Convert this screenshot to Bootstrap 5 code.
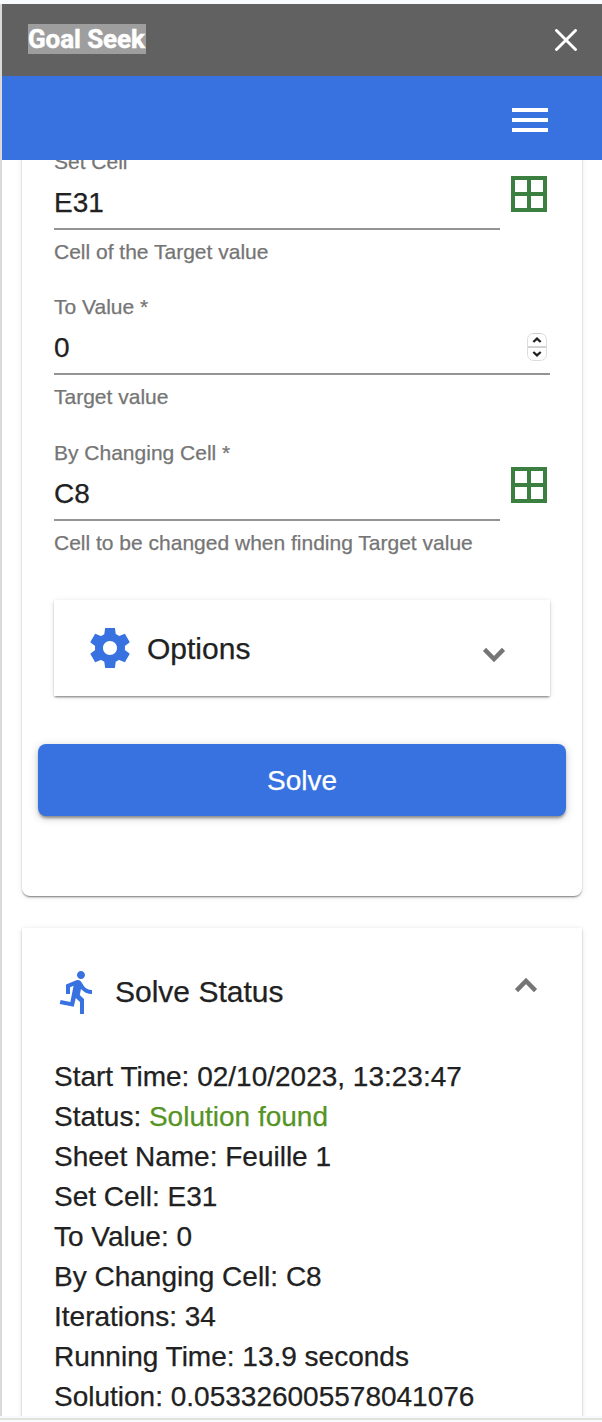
<!DOCTYPE html>
<html lang="en">
<head>
<meta charset="utf-8">
<meta name="viewport" content="width=device-width, initial-scale=1">
<title>Goal Seek</title>
<link href="https://cdn.jsdelivr.net/npm/bootstrap@5.3.0/dist/css/bootstrap.min.css" rel="stylesheet">
<style>
  :root { --brand: #3872e0; --ink: #212121; --muted: #757575; --green: #3b8040; }
  body { font-family: "Liberation Sans", Arial, sans-serif; background: #f8fafd; color: var(--ink); font-size: 28px; padding-top: 4px; height: 1422px; overflow: hidden; -webkit-text-stroke: .25px currentColor; }
  .sidebar { height: 1412px; border-left: 2px solid #dadada; background: #fff; }
  .titlebar { height: 72px; background: #616161; padding: 0 25px 2px 26px; }
  .titlebar h1 { font: 700 26px/30px Roboto, sans-serif; background: #9e9e9e; color: #fff; width: 118px; white-space: nowrap; letter-spacing: -.1px; -webkit-text-stroke: .5px #fff; }
  .titlebar svg { margin-top: 2px; }
  .appbar { height: 84px; background: var(--brand); padding: 4px 48px 0 0; }
  .scroller { padding: 0 20px; }
  .panel { background: #fff; box-shadow: 0 2px 2px -1px rgba(0,0,0,.4), 0 1px 2px rgba(0,0,0,.14), 0 1px 6px rgba(0,0,0,.1); }
  .form-panel { margin-top: -20px; height: 756px; padding: 10px 16px 0; border-radius: 0 0 8px 8px; }
  .field-row { height: 145px; padding: 0 16px; gap: 5px; }
  .field-row.tall { height: 146px; }
  .field-label, .hint { font-size: 21px; line-height: 24px; color: var(--muted); white-space: nowrap; }
  .field-value { margin-top: 13px; height: 43px; line-height: 32px; border-bottom: 2px solid #949494; }
  .hint { margin-top: 10px; }
  .picker { width: 48px; margin: 20px -3px 0 0; }
  .stepper { margin-right: 3px; }
  .options { margin: 14px 16px 0; height: 96px; padding: 0 32px; font-size: 30px; }
  .panel-name { margin: 0 auto 0 13px; }
  .solve { margin-top: 48px; height: 72px; padding: 2px 0 0; border-radius: 8px; background: var(--brand); color: #fff; font-size: 28px; box-shadow: 0 3px 3px -1px rgba(0,0,0,.38), 0 2px 8px rgba(0,0,0,.22); border: 0; }
  .solve:hover { background: #2c64cf; color: #fff; }
  .status-panel { margin-top: 32px; height: 520px; padding: 0 32px; }
  .status-head { height: 129px; padding-bottom: 1px; font-size: 30px; }
  .status-head .panel-name { margin-bottom: 2px; }
  .chevron-up { margin-bottom: 16px; }
  .status-list { line-height: 40px; white-space: nowrap; }
  .found { color: #559424; }
  .bottom-rule { margin-top: 2px; height: 2px; background: #dfe3dc; }
</style>
</head>
<body>
<main class="sidebar d-flex flex-column overflow-hidden">
  <header class="titlebar d-flex align-items-center justify-content-between flex-shrink-0">
    <h1 class="m-0">Goal Seek</h1>
    <svg width="22" height="22" viewBox="0 0 22 22" fill="none" stroke="#fff" stroke-width="2.9" stroke-linecap="round"><path d="M1.5 1.5l19 19M20.500 1.500l-19 19"/></svg>
  </header>
  <nav class="appbar d-flex align-items-center justify-content-end flex-shrink-0">
    <svg width="48" height="48" viewBox="0 0 24 24" fill="#fff"><path d="M3 18h18v-2H3v2zm0-5h18v-2H3v2zm0-7v2h18V6H3z"/></svg>
  </nav>
  <div class="scroller overflow-hidden flex-grow-1">
    <section class="panel form-panel">
      <div class="field-row d-flex">
        <div class="flex-grow-1">
          <div class="field-label">Set Cell</div>
          <div class="field-value">E31</div>
          <div class="hint">Cell of the Target value</div>
        </div>
        <svg class="picker flex-shrink-0" height="48" viewBox="0 0 24 24" fill="#3b8040"><path d="M3 3v18h18V3H3zm8 16H5v-6h6v6zm0-8H5V5h6v6zm8 8h-6v-6h6v6zm0-8h-6V5h6v6z"/></svg>
      </div>
      <div class="field-row tall d-flex">
        <div class="flex-grow-1">
          <div class="field-label">To Value *</div>
          <div class="field-value d-flex justify-content-between">
            <span>0</span>
            <svg class="stepper" width="20" height="30" viewBox="0 0 20 30" fill="none"><rect x=".5" y="1.500" width="19" height="27" rx="6" fill="#fff" stroke="#dcdcdc"/><path d="M6 1.500h8" stroke="#ccc"/><path d="M1 15h18" stroke="#d2d2d2" stroke-width="2"/><path d="M6.300 10L10 6.600 13.700 10M6.300 20L10 23.400 13.700 20" stroke="#222" stroke-width="2.300"/></svg>
          </div>
          <div class="hint">Target value</div>
        </div>
      </div>
      <div class="field-row d-flex">
        <div class="flex-grow-1">
          <div class="field-label">By Changing Cell *</div>
          <div class="field-value">C8</div>
          <div class="hint">Cell to be changed when finding Target value</div>
        </div>
        <svg class="picker flex-shrink-0" height="48" viewBox="0 0 24 24" fill="#3b8040"><path d="M3 3v18h18V3H3zm8 16H5v-6h6v6zm0-8H5V5h6v6zm8 8h-6v-6h6v6zm0-8h-6V5h6v6z"/></svg>
      </div>
      <div class="panel options d-flex align-items-center">
        <svg width="48" height="48" viewBox="0 0 24 24" fill="#3872e0"><path d="M19.440 12.990l-.01.020c.04-.33.080-.67.080-1.010 0-.34-.03-.66-.07-.99l.01.020 2.440-1.920-2.430-4.220-2.870 1.160.01.010c-.52-.4-1.090-.74-1.710-1h.010L14.440 2H9.570l-.44 3.070h.010c-.62.260-1.190.6-1.710 1l.01-.01-2.880-1.170-2.440 4.220 2.440 1.920.01-.02c-.04.330-.07.650-.07.990 0 .340.030.680.080 1.010l-.01-.02-2.100 1.650-.33.260 2.430 4.200 2.880-1.150-.02-.04c.53.410 1.100.750 1.730 1.010h-.03L9.580 22h4.850s.03-.18.060-.42l.38-2.650h-.01c.62-.26 1.200-.6 1.730-1.010l-.02.040 2.880 1.150 2.430-4.200s-.14-.12-.33-.26l-2.110-1.660zM12 15.500c-1.930 0-3.500-1.570-3.500-3.500s1.570-3.500 3.500-3.500 3.500 1.570 3.500 3.500-1.570 3.500-3.500 3.500z"/></svg>
        <span class="panel-name">Options</span>
        <svg class="mt-3 me-2" width="32" height="24" viewBox="0 0 32 24" fill="none" stroke="#757575" stroke-width="4.400"><path d="M6.500 5.400L16 15l9.500-9.600"/></svg>
      </div>
      <button type="button" class="btn solve w-100 d-block">Solve</button>
    </section>
    <section class="panel status-panel">
      <div class="status-head d-flex align-items-center">
        <svg width="48" height="48" viewBox="0 0 24 24" fill="#3872e0"><path d="M13.490 5.480c1.100 0 2-.9 2-2s-.9-2-2-2-2 .9-2 2 .9 2 2 2zm-3.600 13.900l1-4.400 2.100 2v6h2v-7.500l-2.100-2 .6-3c1.300 1.500 3.300 2.500 5.500 2.500v-2c-1.900 0-3.500-1-4.300-2.400l-1-1.600c-.4-.6-1-1-1.700-1-.3 0-.5.1-.8.1l-5.200 2.200v4.700h2v-3.400l1.800-.7-1.600 8.100-4.900-1-.4 2 7 1.400z"/></svg>
        <span class="panel-name">Solve Status</span>
        <svg class="chevron-up me-2" width="32" height="24" viewBox="0 0 32 24" fill="none" stroke="#757575" stroke-width="4.400"><path d="M6.500 18.600L16 9l9.500 9.600"/></svg>
      </div>
      <div class="status-list">
        <div>Start Time: 02/10/2023, 13:23:47</div>
        <div>Status: <span class="found">Solution found</span></div>
        <div>Sheet Name: Feuille 1</div>
        <div>Set Cell: E31</div>
        <div>To Value: 0</div>
        <div>By Changing Cell: C8</div>
        <div>Iterations: 34</div>
        <div>Running Time: 13.9 seconds</div>
        <div>Solution: 0.053326005578041076</div>
      </div>
    </section>
  </div>
</main>
<div class="bottom-rule"></div>
<script src="https://cdn.jsdelivr.net/npm/bootstrap@5.3.0/dist/js/bootstrap.bundle.min.js"></script>
</body>
</html>
